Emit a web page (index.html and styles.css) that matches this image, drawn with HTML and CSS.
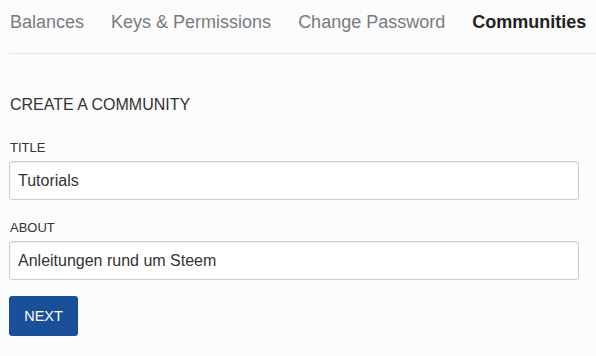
FILE: index.html
```html
<!DOCTYPE html>
<html>
<head>
<meta charset="utf-8">
<link rel="stylesheet" href="styles.css">
</head>
<body>
<div class="page">
  <nav class="tabs">
    <a class="tab">Balances</a>
    <a class="tab">Keys &amp; Permissions</a>
    <a class="tab">Change Password</a>
    <a class="tab active">Communities</a>
  </nav>
  <form class="form">
    <h4 class="heading">CREATE A COMMUNITY</h4>
    <label class="label">TITLE</label>
    <input class="input" type="text" value="Tutorials">
    <label class="label">ABOUT</label>
    <input class="input" type="text" value="Anleitungen rund um Steem">
    <button class="button" type="button">NEXT</button>
  </form>
</div>
</body>
</html>
```
FILE: styles.css
```css
html, body {
  margin: 0;
  padding: 0;
  background: #fcfcfc;
  font-family: "Liberation Sans", Arial, sans-serif;
  color: #333;
}
.page {
  padding-left: 9px;
  width: 596px;
  box-sizing: border-box;
}
.tabs {
  display: flex;
  gap: 27px;
  padding: 11px 0 0 1px;
  height: 54px;
  box-sizing: border-box;
  border-bottom: 1px solid #e8e8e8;
  white-space: nowrap;
}
.tab {
  flex-shrink: 0;
  font-size: 18px;
  line-height: 22px;
  color: #777b80;
  cursor: pointer;
}
.tab.active {
  color: #222;
  font-weight: bold;
}
.form {
  display: flex;
  flex-direction: column;
  align-items: flex-start;
  width: 570px;
  padding-top: 42px;
}
.heading {
  margin: 0 0 26px 1px;
  font-size: 16px;
  font-weight: normal;
  line-height: 18px;
  color: #333;
}
.label {
  margin: 0 0 5px 1px;
  font-size: 13px;
  line-height: 16px;
  color: #333;
}
.input {
  width: 570px;
  height: 39px;
  box-sizing: border-box;
  border: 1px solid #cccccc;
  border-radius: 3px;
  background: #fff;
  padding: 0 8px;
  margin: 0 0 20px 0;
  font-family: "Liberation Sans", Arial, sans-serif;
  font-size: 16px;
  color: #333;
  box-shadow: inset 0 1px 2px rgba(0,0,0,0.08);
}
.button {
  margin-top: -4px;
  width: 69px;
  height: 40px;
  background: #1a5099;
  color: #fff;
  border: none;
  border-radius: 3px;
  font-family: "Liberation Sans", Arial, sans-serif;
  font-size: 14.5px;
  padding: 0;
  cursor: pointer;
}
```
